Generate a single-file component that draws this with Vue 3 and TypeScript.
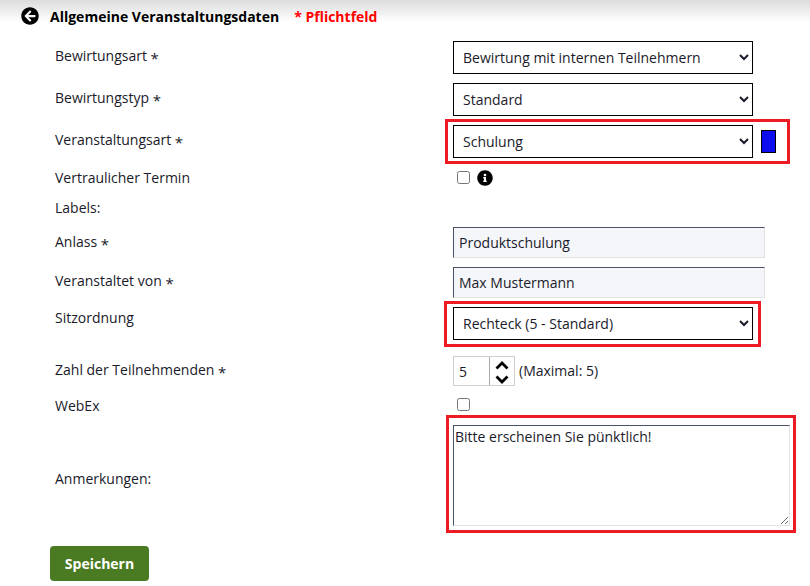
<script setup lang="ts">
const arrow = "M256 504C119 504 8 393 8 256S119 8 256 8s248 111 248 248-111 248-248 248zm28.9-143.6L209.4 288H392c13.3 0 24-10.7 24-24v-16c0-13.3-10.7-24-24-24H209.4l75.5-72.4c9.7-9.3 9.9-24.8.4-34.3l-11-10.9c-9.4-9.4-24.6-9.4-33.9 0L107.7 239c-9.4 9.4-9.4 24.6 0 33.9l132.7 132.7c9.4 9.4 24.6 9.4 33.9 0l11-10.9c9.5-9.5 9.3-25-.4-34.3z";
const info = "M256 8C119.043 8 8 119.083 8 256c0 136.997 111.043 248 248 248s248-111.003 248-248C504 119.083 392.957 8 256 8zm0 110c23.196 0 42 18.804 42 42s-18.804 42-42 42-42-18.804-42-42 18.804-42 42-42zm56 254c0 6.627-5.373 12-12 12h-88c-6.627 0-12-5.373-12-12v-24c0-6.627 5.373-12 12-12h12v-64h-12c-6.627 0-12-5.373-12-12v-24c0-6.627 5.373-12 12-12h64c6.627 0 12 5.373 12 12v100h12c6.627 0 12 5.373 12 12v24z";
</script>

<template>
  <div class="page">
    <header class="head">
      <svg class="back" viewBox="0 0 512 512"><path :d="arrow" /></svg>
      <h1 class="title">Allgemeine Veranstaltungsdaten</h1>
      <span class="required">* Pflichtfeld</span>
    </header>

    <form class="form" @submit.prevent>
      <div class="row r-select">
        <label class="lab">Bewirtungsart <span class="ast">*</span></label>
        <select class="sel"><option>Bewirtung mit internen Teilnehmern</option></select>
      </div>
      <div class="row r-select">
        <label class="lab">Bewirtungstyp <span class="ast">*</span></label>
        <select class="sel"><option>Standard</option></select>
      </div>
      <div class="row r-select">
        <label class="lab">Veranstaltungsart <span class="ast">*</span></label>
        <select class="sel"><option>Schulung</option></select>
        <span class="swatch"></span>
        <span class="mark mark-a"></span>
      </div>
      <div class="row r-check">
        <label class="lab">Vertraulicher Termin</label>
        <input class="chk" type="checkbox" />
        <svg class="info" viewBox="0 0 512 512"><path :d="info" /></svg>
      </div>
      <div class="row r-labels">
        <label class="lab">Labels:</label>
      </div>
      <div class="row r-input">
        <label class="lab">Anlass <span class="ast">*</span></label>
        <input class="txt" type="text" value="Produktschulung" />
      </div>
      <div class="row r-input r-host">
        <label class="lab">Veranstaltet von <span class="ast">*</span></label>
        <input class="txt" type="text" value="Max Mustermann" />
      </div>
      <div class="row r-select r-seat">
        <label class="lab">Sitzordnung</label>
        <select class="sel"><option>Rechteck (5 - Standard)</option></select>
        <span class="mark mark-b"></span>
      </div>
      <div class="row r-num">
        <label class="lab">Zahl der Teilnehmenden <span class="ast">*</span></label>
        <div class="num">
          <input class="num-in" type="text" value="5" />
          <span class="spin">
            <svg viewBox="0 0 14 9"><path d="M1.5 7.5L7 2l5.5 5.5" /></svg>
            <svg viewBox="0 0 14 9"><path d="M1.5 1.5L7 7l5.5-5.5" /></svg>
          </span>
        </div>
        <span class="max">(Maximal: 5)</span>
      </div>
      <div class="row r-web">
        <label class="lab">WebEx</label>
        <input class="chk" type="checkbox" />
      </div>
      <div class="row r-area">
        <label class="lab">Anmerkungen:</label>
        <textarea class="area">Bitte erscheinen Sie pünktlich!</textarea>
        <span class="mark mark-c"></span>
      </div>
      <button class="save" type="submit">Speichern</button>
    </form>
  </div>
</template>

<style>
html, body { margin: 0; background: #fff; }
</style>

<style scoped>
.page {
  width: 810px;
  height: 586px;
  overflow: hidden;
  box-sizing: border-box;
  background: linear-gradient(#dcdcdc 0, #fff 22px) no-repeat;
  font-family: "Open Sans", sans-serif;
  font-size: 14px;
  color: #1a1a2a;
}
.head {
  display: flex;
  align-items: center;
  height: 32px;
  padding-left: 21px;
}
.back { width: 18px; height: 18px; margin-right: 11px; flex: none; }
.title { margin: 0 15px 0 0; font-size: 14px; font-weight: 700; color: #000; }
.required { font-weight: 700; color: #f00; }
.form { padding-top: 9px; padding-left: 55px; display: flex; flex-direction: column; }
.row { position: relative; display: flex; align-items: center; }
.lab { width: 398px; flex: none; position: relative; top: -1.5px; }
.ast { vertical-align: -3px; font-size: 15px; line-height: 1; }
.r-select { height: 33px; margin-bottom: 9px; }
.sel {
  width: 300px;
  height: 33px;
  box-sizing: border-box;
  border: 1px solid #000;
  border-radius: 0;
  background: #fff;
  padding: 0 5px;
  font: 14px "Open Sans", sans-serif;
  color: #1a1a2a;
}
.swatch {
  width: 13px;
  height: 21px;
  margin-left: 8px;
  background: #0d0df0;
  border: 1px solid #000;
}
.mark { position: absolute; border: 3px solid #ed1c24; box-sizing: border-box; pointer-events: none; }
.mark-a { left: 390px; top: -6px; width: 345px; height: 45px; }
.mark-b { left: 389px; top: -6px; width: 317px; height: 46px; }
.mark-c { left: 391px; top: -10px; width: 350px; height: 118px; }
.r-check { height: 22px; }
.r-check .lab { top: -0.5px; }
.chk { width: 13px; height: 13px; margin: 0 0 0 4px; flex: none; }
.r-check .chk { position: relative; top: -1px; }
.info { width: 16px; height: 16px; margin-left: 7px; }
.r-labels { height: 37px; margin-bottom: 1px; }
.r-labels .lab { top: 0; }
.r-input { height: 31px; margin-bottom: 9px; }
.r-input .lab { top: -0.5px; }
.r-host .lab { top: -1.5px; }
.txt {
  width: 312px;
  height: 31px;
  box-sizing: border-box;
  padding: 0 5px;
  border-width: 1px;
  border-style: solid;
  border-color: #4a4f6a #e2e2e6 #e2e2e6 #4a4f6a;
  background: #f5f6fa;
  font: 14px "Open Sans", sans-serif;
  color: #1a1a2a;
  border-radius: 0;
}
.r-seat { margin-bottom: 16px; }
.r-seat .lab { top: -6px; }
.r-num { height: 30px; margin-bottom: 12px; }
.r-num .lab { top: -1px; }
.num {
  display: flex;
  width: 62px;
  height: 30px;
  box-sizing: border-box;
  border: 1px solid #cfcfcf;
  flex: none;
}
.num-in {
  width: 36px;
  border: 0;
  border-right: 1px solid #aaa;
  padding: 0 0 0 5px;
  box-sizing: border-box;
  font: 14px "Open Sans", sans-serif;
  color: #1a1a2a;
  outline: none;
}
.spin { flex: 1; display: flex; flex-direction: column; align-items: center; justify-content: center; gap: 5px; padding-top: 3px; }
.spin svg { width: 14px; height: 9px; fill: none; stroke: #000; stroke-width: 2.8; }
.max { margin-left: 4px; position: relative; top: -1px; }
.r-web { height: 13px; margin-bottom: 14px; }
.r-web .lab { top: 0.5px; }
.r-area { height: 101px; margin-bottom: 20px; }
.r-area .lab { top: 3px; }
.area {
  width: 337px;
  height: 101px;
  box-sizing: border-box;
  padding: 1px;
  border-width: 1px;
  border-style: solid;
  border-color: #4a4f6a #e2e2e6 #e2e2e6 #4a4f6a;
  font: 14px "Open Sans", sans-serif;
  color: #1a1a2a;
  border-radius: 0;
}
.save {
  align-self: flex-start;
  margin-left: -5px;
  width: 99px;
  height: 35px;
  border: 0;
  border-radius: 4px;
  background: #4a7a22;
  color: #fff;
  font: 700 14px "Open Sans", sans-serif;
}
</style>
